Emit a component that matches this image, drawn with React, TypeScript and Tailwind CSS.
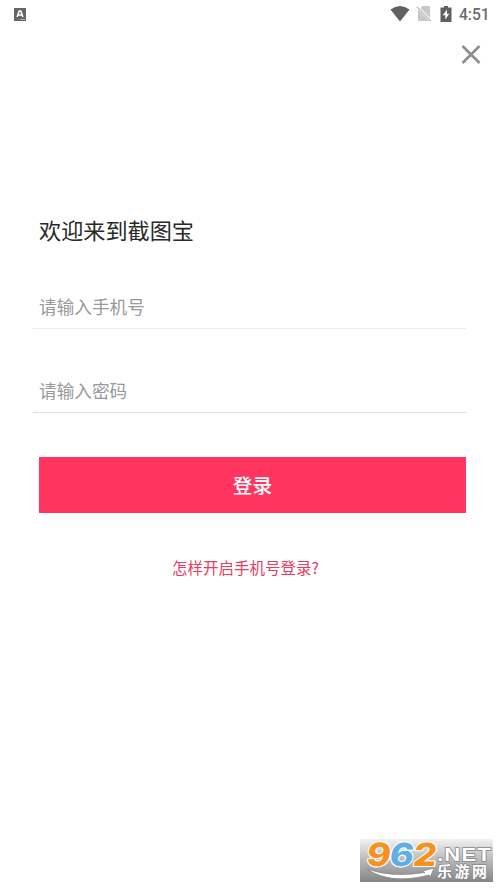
import React from 'react';

const StatusBar: React.FC = () => (
  <header className="flex h-7 items-center justify-between pl-3.5 pr-[10px] text-[#6b6b6b]">
    <svg width="12" height="13" viewBox="0 0 12 13" aria-hidden="true">
      <rect width="12" height="13" rx=".5" fill="#666" />
      <path d="M3.1 9 5.2 3.1h1.6L8.9 9M4.1 7h3.8" fill="none" stroke="#fff" strokeWidth="1.5" />
      <path d="M6.5 11.5h4.5" stroke="#ddd" strokeDasharray="1 .6" />
    </svg>
    <div className="flex items-center">
      <svg width="20" height="16" viewBox="0 0 20 16" aria-hidden="true">
        <path d="M.5 3.6Q10-3.4 19.5 3.6L10 15.6Z" fill="#606060" />
      </svg>
      <svg className="ml-[6px]" width="16" height="16" viewBox="0 0 16 16" aria-hidden="true">
        <path d="M6.3 0H13q1 0 1 1v11.6L4.1 2.5Z" fill="#c8c8c8" />
        <path d="M1.9 3.6 13.2 15.1H2.9q-1 0-1-1Z" fill="#c8c8c8" />
        <path d="M1.9.4 15.4 14.2" stroke="#fff" strokeWidth="1.1" />
        <path d="M.8.8 15 15.2" stroke="#bdbdbd" strokeWidth="1.3" />
      </svg>
      <svg className="ml-2" width="12" height="16" viewBox="0 0 12 16" aria-hidden="true">
        <path d="M4 0h4v1.5h3q.5 0 .5.5v13.5q0 .5-.5.5H1q-.5 0-.5-.5V2q0-.5.5-.5h3Z" fill="#606060" />
        <path d="M7 3.5 2.8 9.2h2.5v4.2l4-5.7H7Z" fill="#fff" />
      </svg>
      <span className="ml-[7px] w-[30px] whitespace-nowrap pt-px font-[Roboto,sans-serif] text-[15.6px] font-medium leading-4">4:51</span>
    </div>
  </header>
);

interface FieldProps {
  type: string;
  placeholder: string;
  lineClass: string;
}

const Field: React.FC<FieldProps> = ({ type, placeholder, lineClass }) => (
  <input
    type={type}
    placeholder={placeholder}
    className={`block h-11 w-full border-b bg-transparent pb-px pl-1.5 text-[17.65px] text-[#292929] outline-none placeholder:text-[#999] ${lineClass}`}
  />
);

const SiteBadge: React.FC = () => (
  <svg className="block overflow-visible" width="133" height="43" viewBox="0 0 133 43" aria-label="962.NET 乐游网">
    <defs>
      <linearGradient id="badgeBg" x1="0" y1="0" x2="0" y2="1">
        <stop offset="0" stopColor="#f2f2f2" />
        <stop offset=".4" stopColor="#c3c3c3" />
        <stop offset="1" stopColor="#858585" />
      </linearGradient>
    </defs>
    <rect width="133" height="43" fill="url(#badgeBg)" />
    <path d="M7 30Q32 39 65 33.5L62.5 32 74 29 70.5 37.5 69 36Q30 46 7 30Z" fill="#fff" stroke="#777" strokeWidth=".6" />
    {/* coloured digits, slanted around their baseline */}
    <g transform="translate(0 27) skewX(-8)" fontFamily="Inter, sans-serif" fontWeight="800" fontSize="32" stroke="#fff" strokeWidth="2.2" paintOrder="stroke" strokeLinejoin="round">
      <text x="5.5" y="0" fill="#f79222" textLength="24" lengthAdjust="spacingAndGlyphs">9</text>
      <text x="28.5" y="0" fill="#60aee3" textLength="24" lengthAdjust="spacingAndGlyphs">6</text>
      <text x="52" y="0" fill="#f79222" textLength="23.5" lengthAdjust="spacingAndGlyphs">2</text>
    </g>
    <g fill="#fff" stroke="#888" strokeWidth="1.4" paintOrder="stroke" fontWeight="700">
      <text x="77" y="21.5" fontFamily="Liberation Sans, sans-serif" fontSize="18" letterSpacing="1" textLength="55" lengthAdjust="spacingAndGlyphs">.NET</text>
      <text x="77" y="38" fontFamily="Noto Sans CJK SC, sans-serif" fontSize="15" textLength="50">乐游网</text>
    </g>
  </svg>
);

export default function App() {
  return (
    <div className="flex h-[888px] w-[499px] flex-col overflow-hidden bg-white font-['Noto_Sans_CJK_SC',sans-serif]">
      <StatusBar />
      <div className="flex justify-end pr-[18px] pt-4">
        <button type="button" aria-label="关闭">
          <svg className="block" width="20" height="20" viewBox="0 0 20 20" fill="none" stroke="#8d8d8d" strokeWidth="2.6">
            <path d="m1.5 2 17 17m0-17-17 17" />
          </svg>
        </button>
      </div>
      <main className="px-[33px] pt-[149px]">
        <h1 className="pl-1.5 text-[22.15px] leading-8 text-[#292929]">欢迎来到截图宝</h1>
        <form className="pt-10">
          <Field type="tel" placeholder="请输入手机号" lineClass="border-[#ececec]" />
          <div className="pt-10">
            <Field type="password" placeholder="请输入密码" lineClass="border-[#dedede]" />
          </div>
          <div className="pl-1.5 pt-11">
            <button type="button" className="block h-14 w-full bg-[#ff355f] text-[19.8px] font-medium text-white">登录</button>
          </div>
        </form>
        <a href="#" className="ml-[139px] mt-[42px] block w-fit text-[15.5px] leading-6 text-[#e83c61]">怎样开启手机号登录?</a>
      </main>
      <footer className="mt-auto flex justify-end pb-1.5 pr-1.5">
        <SiteBadge />
      </footer>
    </div>
  );
}
